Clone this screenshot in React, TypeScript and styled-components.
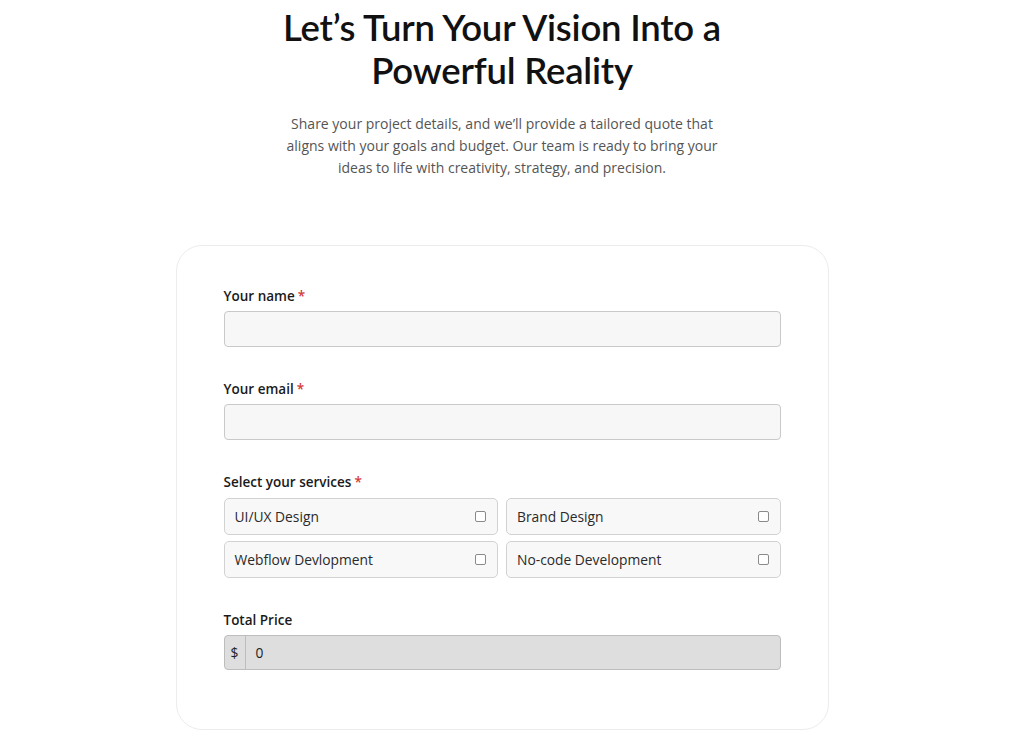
import styled, { createGlobalStyle } from 'styled-components';

const GlobalStyle = createGlobalStyle`
  html, body {
    margin: 0;
    padding: 0;
    background: #ffffff;
  }
  * {
    box-sizing: border-box;
  }
`;

const Page = styled.main`
  display: flex;
  flex-direction: column;
  align-items: center;
  padding: 6px 20px 0 0;
  font-family: 'Open Sans', 'Liberation Sans', sans-serif;
`;

const Heading = styled.h1`
  margin: 0;
  font-family: Lato, 'Open Sans', sans-serif;
  font-weight: 600;
  font-size: 36.5px;
  line-height: 43px;
  color: #111111;
  text-align: center;
  letter-spacing: -0.2px;
`;

const Intro = styled.p`
  margin: 21px 0 0;
  width: 450px;
  font-size: 14px;
  line-height: 22px;
  color: #555555;
  text-align: center;
`;

const Card = styled.form`
  margin-top: 66px;
  width: 653px;
  border: 1px solid #ececec;
  border-radius: 26px;
  padding: 41px 47px 59px;
  display: flex;
  flex-direction: column;
  gap: 33px;
`;

const Field = styled.div`
  display: flex;
  flex-direction: column;
  gap: 6px;
`;

const Label = styled.label`
  font-size: 13.5px;
  font-weight: 600;
  line-height: 18px;
  color: #1a1a1a;
`;

const Required = styled.span`
  color: #d33a3a;
  margin-left: 3px;
`;

const TextInput = styled.input`
  height: 36px;
  width: 100%;
  border: 1px solid #c9c9c9;
  border-radius: 4px;
  background: #f7f7f7;
  padding: 0 10px;
  font: inherit;
`;

const ServiceGrid = styled.div`
  display: grid;
  grid-template-columns: 1fr 1fr;
  column-gap: 8px;
  row-gap: 6px;
  margin-top: 1px;
`;

const ServiceOption = styled.label`
  height: 37px;
  display: flex;
  align-items: center;
  justify-content: space-between;
  padding: 0 11px 0 10px;
  border: 1px solid #d2d2d2;
  border-radius: 5px;
  background: #f8f8f8;
  font-size: 13.8px;
  color: #2a2a2a;
`;

const Box = styled.span`
  width: 11px;
  height: 11px;
  border: 1px solid #8a8a8a;
  border-radius: 2px;
  background: #ffffff;
`;

const PriceGroup = styled.div`
  display: flex;
  height: 35px;
  border: 1px solid #bdbdbd;
  border-radius: 4px;
  overflow: hidden;
  background: #dedede;
  font-size: 13.8px;
  color: #222222;
`;

const Prefix = styled.span`
  width: 21px;
  display: flex;
  align-items: center;
  justify-content: center;
  border-right: 1px solid #bdbdbd;
`;

const PriceValue = styled.span`
  display: flex;
  align-items: center;
  padding-left: 10px;
`;

const services = ['UI/UX Design', 'Brand Design', 'Webflow Devlopment', 'No-code Development'];

export default function App() {
  return (
    <>
      <GlobalStyle />
      <Page>
        <Heading>
          Let’s Turn Your Vision Into a
          <br />
          Powerful Reality
        </Heading>
        <Intro>
          Share your project details, and we’ll provide a tailored quote that aligns with your goals
          and budget. Our team is ready to bring your ideas to life with creativity, strategy, and
          precision.
        </Intro>
        <Card>
          <Field>
            <Label>
              Your name<Required>*</Required>
            </Label>
            <TextInput type="text" />
          </Field>
          <Field>
            <Label>
              Your email<Required>*</Required>
            </Label>
            <TextInput type="email" />
          </Field>
          <Field>
            <Label>
              Select your services<Required>*</Required>
            </Label>
            <ServiceGrid>
              {services.map((s) => (
                <ServiceOption key={s}>
                  {s}
                  <Box />
                </ServiceOption>
              ))}
            </ServiceGrid>
          </Field>
          <Field>
            <Label>Total Price</Label>
            <PriceGroup>
              <Prefix>$</Prefix>
              <PriceValue>0</PriceValue>
            </PriceGroup>
          </Field>
        </Card>
      </Page>
    </>
  );
}
